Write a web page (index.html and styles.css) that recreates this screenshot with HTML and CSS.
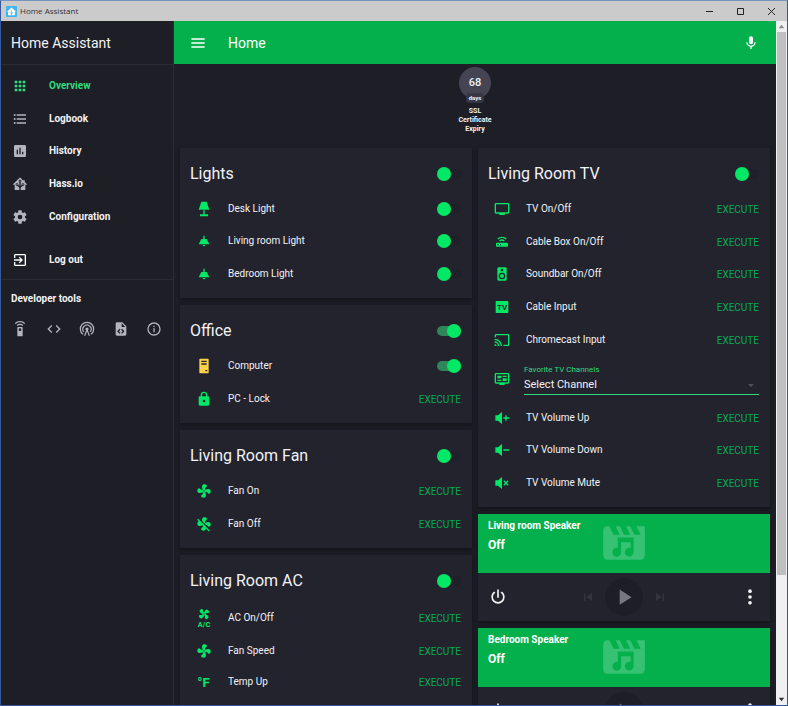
FILE: index.html
```html
<!DOCTYPE html>
<html lang="en">
<head>
<meta charset="utf-8">
<title>Home Assistant</title>
<link rel="stylesheet" href="styles.css">
</head>
<body>
<svg class="sprite" aria-hidden="true">
  <symbol id="apps" viewBox="0 0 24 24"><path d="M16,20H20V16H16M16,14H20V10H16M10,8H14V4H10M16,8H20V4H16M10,14H14V10H10M4,14H8V10H4M4,20H8V16H4M10,20H14V16H10M4,8H8V4H4V8Z"/></symbol>
  <symbol id="list" viewBox="0 0 24 24"><path d="M7,5H21V7H7V5M7,13V11H21V13H7M7,19V17H21V19H7"/><circle cx="4" cy="6" r="1.5"/><circle cx="4" cy="12" r="1.5"/><circle cx="4" cy="18" r="1.5"/></symbol>
  <symbol id="poll" viewBox="0 0 24 24"><path fill-rule="evenodd" d="M17,17H15V13H17ZM13,17H11V7H13ZM9,17H7V10H9ZM19,3H5C3.89,3 3,3.89 3,5V19A2,2 0 0,0 5,21H19A2,2 0 0,0 21,19V5C21,3.89 20.1,3 19,3Z"/></symbol>
  <symbol id="hass" viewBox="0 0 24 24"><path d="M21.8,13H20V21H13V17.67L15.79,14.88L16.5,15C17.66,15 18.6,14.06 18.6,12.9C18.6,11.74 17.66,10.8 16.5,10.8A2.1,2.1 0 0,0 14.4,12.9L14.5,13.61L13,15.13V9.65C13.66,9.29 14.1,8.6 14.1,7.8A2.1,2.1 0 0,0 12,5.7A2.1,2.1 0 0,0 9.9,7.8C9.9,8.6 10.34,9.29 11,9.65V15.13L9.5,13.61L9.6,12.9A2.1,2.1 0 0,0 7.5,10.8A2.1,2.1 0 0,0 5.4,12.9A2.1,2.1 0 0,0 7.5,15L8.21,14.88L11,17.67V21H4V13H2.25C1.83,13 1.42,13 1.42,12.79C1.43,12.57 1.85,12.15 2.28,11.72L11,3C11.33,2.67 11.67,2.33 12,2.33C12.33,2.33 12.67,2.67 13,3L17,7V6H19V9L21.78,11.78C22.18,12.18 22.59,12.59 22.6,12.8C22.6,13 22.2,13 21.8,13Z"/><circle cx="7.5" cy="12.9" r=".9"/><circle cx="16.5" cy="12.9" r=".9"/><circle cx="12" cy="7.8" r=".9"/></symbol>
  <symbol id="cog" viewBox="0 0 24 24"><path d="M12,15.5A3.5,3.5 0 0,1 8.5,12A3.5,3.5 0 0,1 12,8.5A3.5,3.5 0 0,1 15.5,12A3.5,3.5 0 0,1 12,15.5M19.43,12.97C19.47,12.65 19.5,12.33 19.5,12C19.5,11.67 19.47,11.34 19.43,11L21.54,9.37C21.73,9.22 21.78,8.95 21.66,8.73L19.66,5.27C19.54,5.05 19.27,4.96 19.05,5.05L16.56,6.05C16.04,5.66 15.5,5.32 14.87,5.07L14.5,2.42C14.46,2.18 14.25,2 14,2H10C9.75,2 9.54,2.18 9.5,2.42L9.13,5.07C8.5,5.32 7.96,5.66 7.44,6.05L4.95,5.05C4.73,4.96 4.46,5.05 4.34,5.27L2.34,8.73C2.21,8.95 2.27,9.22 2.46,9.37L4.57,11C4.53,11.34 4.5,11.67 4.5,12C4.5,12.33 4.53,12.65 4.57,12.97L2.46,14.63C2.27,14.78 2.21,15.05 2.34,15.27L4.34,18.73C4.46,18.95 4.73,19.03 4.95,18.95L7.44,17.94C7.96,18.34 8.5,18.68 9.13,18.93L9.5,21.58C9.54,21.82 9.75,22 10,22H14C14.25,22 14.46,21.82 14.5,21.58L14.87,18.93C15.5,18.67 16.04,18.34 16.56,17.94L19.05,18.95C19.27,19.03 19.54,18.95 19.66,18.73L21.66,15.27C21.78,15.05 21.73,14.78 21.54,14.63L19.43,12.97Z"/></symbol>
  <symbol id="exit" viewBox="0 0 24 24"><path d="M19,3H5C3.89,3 3,3.89 3,5V9H5V5H19V19H5V15H3V19A2,2 0 0,0 5,21H19A2,2 0 0,0 21,19V5C21,3.89 20.1,3 19,3M10.08,15.58L11.5,17L16.5,12L11.5,7L10.08,8.41L12.67,11H3V13H12.67L10.08,15.58Z"/></symbol>
  <symbol id="remote" viewBox="0 0 24 24"><path d="M12,0C8.96,0 6.21,1.23 4.22,3.22L5.63,4.63C7.26,3 9.5,2 12,2C14.5,2 16.74,3 18.36,4.64L19.77,3.23C17.79,1.23 15.04,0 12,0M7.05,6.05L8.46,7.46C9.37,6.56 10.62,6 12,6C13.38,6 14.63,6.56 15.54,7.46L16.95,6.05C15.68,4.78 13.93,4 12,4C10.07,4 8.32,4.78 7.05,6.05M12,15A2,2 0 0,1 10,13A2,2 0 0,1 12,11A2,2 0 0,1 14,13A2,2 0 0,1 12,15M15,9H9A1,1 0 0,0 8,10V22A1,1 0 0,0 9,23H15A1,1 0 0,0 16,22V10A1,1 0 0,0 15,9Z"/></symbol>
  <symbol id="code" viewBox="0 0 24 24"><path d="M14.6,16.6L19.2,12L14.6,7.4L16,6L22,12L16,18L14.6,16.6M9.4,16.6L4.8,12L9.4,7.4L8,6L2,12L8,18L9.4,16.6Z"/></symbol>
  <symbol id="antenna" viewBox="0 0 24 24"><g fill="none" stroke="currentColor" stroke-width="1.8"><path d="M6,20A10,10 0 1,1 18,20"/><path d="M7.2,16.4A6.2,6.2 0 1,1 16.8,16.4"/><path d="M12,13L8.4,22M12,13L15.6,22"/></g><circle cx="12" cy="12" r="2.4"/></symbol>
  <symbol id="file" viewBox="0 0 24 24"><path fill-rule="evenodd" d="M13,9H18.5L13,3.5V9ZM6,2H14L20,8V20A2,2 0 0,1 18,22H6C4.89,22 4,21.1 4,20V4C4,2.89 4.89,2 6,2ZM6.12,15.5L9.86,19.24L11.28,17.83L8.95,15.5L11.28,13.17L9.86,11.76L6.12,15.5ZM17.28,15.5L13.54,11.76L12.12,13.17L14.45,15.5L12.12,17.83L13.54,19.24L17.28,15.5Z"/></symbol>
  <symbol id="info" viewBox="0 0 24 24"><path d="M11,9H13V7H11M12,20C7.59,20 4,16.41 4,12C4,7.59 7.59,4 12,4C16.41,4 20,7.59 20,12C20,16.41 16.41,20 12,20M12,2A10,10 0 0,0 2,12A10,10 0 0,0 12,22A10,10 0 0,0 22,12A10,10 0 0,0 12,2M11,17H13V11H11V17Z"/></symbol>
  <symbol id="menu" viewBox="0 0 24 24"><path d="M2,5H22V7H2ZM2,11H22V13H2ZM2,17H22V19H2Z"/></symbol>
  <symbol id="mic" viewBox="0 0 24 24"><path d="M12,2A3,3 0 0,1 15,5V11A3,3 0 0,1 12,14A3,3 0 0,1 9,11V5A3,3 0 0,1 12,2M19,11C19,14.53 16.39,17.44 13,17.93V21H11V17.93C7.61,17.44 5,14.53 5,11H7A5,5 0 0,0 12,16A5,5 0 0,0 17,11H19Z"/></symbol>
  <symbol id="lamp" viewBox="0 0 24 24"><path d="M8,1H16L20,13H4L8,1M11,14H13V20H18V23H6V20H11V14Z"/></symbol>
  <symbol id="ceiling" viewBox="0 0 24 24"><path d="M8,9H11V4H13V9H16L20,17H4L8,9M14,18A2,2 0 0,1 12,20A2,2 0 0,1 10,18H14Z"/></symbol>
  <symbol id="tower" viewBox="0 0 24 24"><path fill-rule="evenodd" d="M6,1H18A1,1 0 0,1 19,2V22A1,1 0 0,1 18,23H6A1,1 0 0,1 5,22V2A1,1 0 0,1 6,1ZM8,4V6H16V4ZM16,8H8V10H16ZM17,18H14V20H17Z"/></symbol>
  <symbol id="lock" viewBox="0 0 24 24"><path d="M12,17A2,2 0 0,0 14,15C14,13.89 13.1,13 12,13A2,2 0 0,0 10,15A2,2 0 0,0 12,17M18,8A2,2 0 0,1 20,10V20A2,2 0 0,1 18,22H6A2,2 0 0,1 4,20V10C4,8.89 4.9,8 6,8H7V6A5,5 0 0,1 12,1A5,5 0 0,1 17,6V8H18M12,3A3,3 0 0,0 9,6V8H15V6A3,3 0 0,0 12,3Z"/></symbol>
  <symbol id="fan" viewBox="0 0 24 24"><path d="M12,11A1,1 0 0,0 11,12A1,1 0 0,0 12,13A1,1 0 0,0 13,12A1,1 0 0,0 12,11M12.5,2C17,2 17.11,5.57 14.75,6.75C13.76,7.24 13.32,8.29 13.13,9.22C13.61,9.42 14.03,9.73 14.35,10.13C18.05,8.13 22.03,8.92 22.03,12.5C22.03,17 18.46,17.1 17.28,14.73C16.78,13.74 15.72,13.3 14.79,13.11C14.59,13.59 14.28,14 13.88,14.34C15.87,18.03 15.08,22 11.5,22C7,22 6.91,18.42 9.27,17.24C10.25,16.75 10.69,15.71 10.89,14.79C10.4,14.59 9.97,14.27 9.65,13.87C5.96,15.85 2,15.07 2,11.5C2,7 5.56,6.89 6.74,9.26C7.24,10.25 8.29,10.68 9.22,10.87C9.41,10.39 9.73,9.97 10.14,9.65C8.15,5.96 8.94,2 12.5,2Z"/></symbol>
  <symbol id="fan-off" viewBox="0 0 24 24"><use href="#fan" width="24" height="24"/><path class="cut" d="M3,3L22,22"/><path class="slash" d="M2.5,5L20,22.5"/></symbol>
  <symbol id="tv" viewBox="0 0 24 24"><path d="M21,17H3V5H21M21,3H3A2,2 0 0,0 1,5V17A2,2 0 0,0 3,19H8V21H16V19H21A2,2 0 0,0 23,17V5A2,2 0 0,0 21,3Z"/></symbol>
  <symbol id="router" viewBox="0 0 24 24"><path d="M4,13H20A1,1 0 0,1 21,14V18A1,1 0 0,1 20,19H4A1,1 0 0,1 3,18V14A1,1 0 0,1 4,13M9,17H10V15H9V17M5,15V17H7V15H5M19,6.93L17.6,8.34C16.15,6.89 14.15,6 11.93,6C9.72,6 7.72,6.89 6.27,8.34L4.87,6.93C6.68,5.12 9.18,4 11.93,4C14.69,4 17.19,5.12 19,6.93M16.17,9.76L14.77,11.17C14.04,10.45 13.04,10 11.93,10C10.82,10 9.82,10.45 9.1,11.17L7.7,9.76C8.78,8.67 10.28,8 11.93,8C13.58,8 15.08,8.67 16.17,9.76Z"/></symbol>
  <symbol id="speaker" viewBox="0 0 24 24"><path d="M12,12A3,3 0 0,0 9,15A3,3 0 0,0 12,18A3,3 0 0,0 15,15A3,3 0 0,0 12,12M12,20A5,5 0 0,1 7,15A5,5 0 0,1 12,10A5,5 0 0,1 17,15A5,5 0 0,1 12,20M12,4A2,2 0 0,1 14,6A2,2 0 0,1 12,8C10.89,8 10,7.1 10,6C10,4.89 10.89,4 12,4M17,2H7C5.89,2 5,2.89 5,4V20A2,2 0 0,0 7,22H17A2,2 0 0,0 19,20V4C19,2.89 18.1,2 17,2Z"/></symbol>
  <symbol id="cast" viewBox="0 0 24 24"><path d="M1,10V12A9,9 0 0,1 10,21H12C12,14.92 7.07,10 1,10M1,14V16A5,5 0 0,1 6,21H8A7,7 0 0,0 1,14M1,18V21H4A3,3 0 0,0 1,18M21,3H3C1.89,3 1,3.89 1,5V8H3V5H21V19H14V21H21A2,2 0 0,0 23,19V5C23,3.89 22.1,3 21,3Z"/></symbol>
  <symbol id="guide" viewBox="0 0 24 24"><path d="M21,17V5H3V17H21M21,3A2,2 0 0,1 23,5V17A2,2 0 0,1 21,19H16V21H8V19H3A2,2 0 0,1 1,17V5A2,2 0 0,1 3,3H21M5,7H11V11H5V7M5,13H11V15H5V13M13,7H19V9H13V7M13,11H19V15H13V11Z"/></symbol>
  <symbol id="vol-up" viewBox="0 0 24 24"><path d="M2,8H6L12,3V21L6,16H2V8M14,11H17V8H19V11H23V13H19V16H17V13H14V11Z"/></symbol>
  <symbol id="vol-down" viewBox="0 0 24 24"><path d="M2,8H6L12,3V21L6,16H2V8M14,11H23V13H14V11Z"/></symbol>
  <symbol id="vol-mute" viewBox="0 0 24 24"><path d="M2,8H6L12,3V21L6,16H2V8M16.59,12L14,9.41L15.41,8L18,10.59L20.59,8L22,9.41L19.41,12L22,14.59L20.59,16L18,13.41L15.41,16L14,14.59L16.59,12Z"/></symbol>
  <symbol id="power" viewBox="0 0 24 24"><path d="M16.56,5.44L15.11,6.89C16.84,7.94 18,9.83 18,12A6,6 0 0,1 12,18A6,6 0 0,1 6,12C6,9.83 7.16,7.94 8.88,6.88L7.44,5.44C5.36,6.88 4,9.28 4,12A8,8 0 0,0 12,20A8,8 0 0,0 20,12C20,9.28 18.64,6.88 16.56,5.44M13,3H11V13H13"/></symbol>
  <symbol id="prev" viewBox="0 0 24 24"><path d="M6,18V6H8V18H6M9.5,12L18,6V18L9.5,12Z"/></symbol>
  <symbol id="next" viewBox="0 0 24 24"><path d="M16,18H18V6H16M6,18L14.5,12L6,6V18Z"/></symbol>
  <symbol id="play" viewBox="0 0 24 24"><path d="M8,5.14V19.14L19,12.14L8,5.14Z"/></symbol>
  <symbol id="dots" viewBox="0 0 24 24"><circle cx="12" cy="5" r="2.2"/><circle cx="12" cy="12" r="2.2"/><circle cx="12" cy="19" r="2.2"/></symbol>
  <symbol id="movie" viewBox="0 0 24 24"><path d="M18,4L20,8H17L15,4H13L15,8H12L10,4H8L10,8H7L5,4H4A2,2 0 0,0 2,6V18A2,2 0 0,0 4,20H20A2,2 0 0,0 22,18V4H18Z"/><path class="note" d="M9,9.4H16.6V16.4A2.1,2.1 0 1,1 15.2,14.4V11.6H10.6V16.4A2.1,2.1 0 1,1 9,14.4Z"/></symbol>
</svg>

<div class="window">
  <div class="titlebar">
    <svg class="app-icon" viewBox="0 0 12 12" aria-hidden="true"><rect width="12" height="12" rx="1" fill="#41b6ee"/><path fill="#fff" d="M6,1.6L11,6.3H9.7V10.2H2.3V6.3H1Z"/><path stroke="#41b6ee" stroke-width=".8" fill="none" d="M6,10V5M6,8.6L4,6.8M6,8.6L8,6.8"/></svg>
    <span class="app-name">Home Assistant</span>
    <div class="win-buttons">
      <button aria-label="Minimize"><svg viewBox="0 0 9 9"><path d="M1,4.5H8"/></svg></button>
      <button aria-label="Maximize"><svg viewBox="0 0 9 9"><path d="M1.5,1.5H7.5V7.5H1.5Z"/></svg></button>
      <button aria-label="Close"><svg viewBox="0 0 9 9"><path d="M1,1L8,8M8,1L1,8"/></svg></button>
    </div>
  </div>

  <div class="app">
    <aside class="sidebar">
      <h1 class="brand">Home Assistant</h1>
      <nav class="nav">
        <a class="nav-item active" href="#overview"><svg class="icon"><use href="#apps"/></svg>Overview</a>
        <a class="nav-item" href="#logbook"><svg class="icon"><use href="#list"/></svg>Logbook</a>
        <a class="nav-item" href="#history"><svg class="icon"><use href="#poll"/></svg>History</a>
        <a class="nav-item" href="#hassio"><svg class="icon"><use href="#hass"/></svg>Hass.io</a>
        <a class="nav-item" href="#config"><svg class="icon"><use href="#cog"/></svg>Configuration</a>
      </nav>
      <a class="nav-item logout" href="#logout"><svg class="icon"><use href="#exit"/></svg>Log out</a>
      <section class="dev">
        <h2>Developer tools</h2>
        <div class="dev-tools">
          <a href="#services" aria-label="Services"><svg class="icon"><use href="#remote"/></svg></a>
          <a href="#states" aria-label="States"><svg class="icon"><use href="#code"/></svg></a>
          <a href="#events" aria-label="Events"><svg class="icon"><use href="#antenna"/></svg></a>
          <a href="#templates" aria-label="Templates"><svg class="icon"><use href="#file"/></svg></a>
          <a href="#about" aria-label="Info"><svg class="icon"><use href="#info"/></svg></a>
        </div>
      </section>
    </aside>

    <main class="main">
      <header class="toolbar">
        <button aria-label="Menu"><svg class="icon"><use href="#menu"/></svg></button>
        <h2>Home</h2>
        <button class="voice" aria-label="Voice command"><svg class="icon"><use href="#mic"/></svg></button>
      </header>

      <div class="badges">
        <div class="badge">
          <div class="badge-circle">68<span class="badge-unit">days</span></div>
          <div class="badge-name">SSL Certificate Expiry</div>
        </div>
      </div>

      <div class="columns">
        <div class="column">
          <section class="card">
            <header><h3 id="t-lights">Lights</h3><input class="toggle" type="checkbox" aria-labelledby="t-lights"></header>
            <div class="rows three">
              <div class="row"><svg class="icon"><use href="#lamp"/></svg><label for="desk">Desk Light</label><input class="toggle" type="checkbox" id="desk"></div>
              <div class="row"><svg class="icon"><use href="#ceiling"/></svg><label for="living">Living room Light</label><input class="toggle" type="checkbox" id="living"></div>
              <div class="row"><svg class="icon"><use href="#ceiling"/></svg><label for="bedroom">Bedroom Light</label><input class="toggle" type="checkbox" id="bedroom"></div>
            </div>
          </section>
          <section class="card">
            <header><h3 id="t-office">Office</h3><input class="toggle" type="checkbox" aria-labelledby="t-office" checked></header>
            <div class="rows two">
              <div class="row"><svg class="icon on"><use href="#tower"/></svg><label for="computer">Computer</label><input class="toggle" type="checkbox" id="computer" checked></div>
              <div class="row"><svg class="icon"><use href="#lock"/></svg><span>PC - Lock</span><button>EXECUTE</button></div>
            </div>
          </section>
          <section class="card">
            <header><h3 id="t-fan">Living Room Fan</h3><input class="toggle" type="checkbox" aria-labelledby="t-fan"></header>
            <div class="rows two">
              <div class="row"><svg class="icon"><use href="#fan"/></svg><span>Fan On</span><button>EXECUTE</button></div>
              <div class="row"><svg class="icon"><use href="#fan-off"/></svg><span>Fan Off</span><button>EXECUTE</button></div>
            </div>
          </section>
          <section class="card">
            <header><h3 id="t-ac">Living Room AC</h3><input class="toggle" type="checkbox" aria-labelledby="t-ac"></header>
            <div class="rows three">
              <div class="row"><svg class="icon tall" viewBox="0 0 24 30"><g transform="translate(12 9) rotate(45) scale(.86) translate(-12 -12)"><use href="#fan" width="24" height="24"/></g><text class="ac-text" x="12" y="29" text-anchor="middle">A/C</text></svg><span>AC On/Off</span><button>EXECUTE</button></div>
              <div class="row"><svg class="icon"><use href="#fan"/></svg><span>Fan Speed</span><button>EXECUTE</button></div>
              <div class="row"><svg class="icon" viewBox="0 0 24 24"><text class="f-text" x="2" y="20">°F</text></svg><span>Temp Up</span><button>EXECUTE</button></div>
            </div>
          </section>
        </div>

        <div class="column">
          <section class="card">
            <header><h3 id="t-tv">Living Room TV</h3><input class="toggle" type="checkbox" aria-labelledby="t-tv"></header>
            <div class="rows five">
              <div class="row"><svg class="icon"><use href="#tv"/></svg><span>TV On/Off</span><button>EXECUTE</button></div>
              <div class="row"><svg class="icon"><use href="#router"/></svg><span>Cable Box On/Off</span><button>EXECUTE</button></div>
              <div class="row"><svg class="icon"><use href="#speaker"/></svg><span>Soundbar On/Off</span><button>EXECUTE</button></div>
              <div class="row"><svg class="icon" viewBox="0 0 24 24"><rect x="2.5" y="3" width="19" height="18" rx="1"/><text class="tv-text" x="12" y="16.5" text-anchor="middle">TV</text></svg><span>Cable Input</span><button>EXECUTE</button></div>
              <div class="row"><svg class="icon"><use href="#cast"/></svg><span>Chromecast Input</span><button>EXECUTE</button></div>
            </div>
            <div class="select-row">
              <svg class="icon"><use href="#guide"/></svg>
              <div class="field">
                <label for="channel">Favorite TV Channels</label>
                <select id="channel"><option>Select Channel</option></select>
              </div>
            </div>
            <div class="rows three">
              <div class="row"><svg class="icon"><use href="#vol-up"/></svg><span>TV Volume Up</span><button>EXECUTE</button></div>
              <div class="row"><svg class="icon"><use href="#vol-down"/></svg><span>TV Volume Down</span><button>EXECUTE</button></div>
              <div class="row"><svg class="icon"><use href="#vol-mute"/></svg><span>TV Volume Mute</span><button>EXECUTE</button></div>
            </div>
          </section>
          <section class="media">
            <div class="banner"><div class="caption"><h4>Living room Speaker</h4><p>Off</p></div><svg class="art"><use href="#movie"/></svg></div>
            <div class="controls">
              <button aria-label="Power"><svg class="icon large"><use href="#power"/></svg></button>
              <div class="playback">
                <button class="skip" aria-label="Previous"><svg class="icon"><use href="#prev"/></svg></button>
                <button class="play" aria-label="Play"><svg><use href="#play"/></svg></button>
                <button class="skip" aria-label="Next"><svg class="icon"><use href="#next"/></svg></button>
              </div>
              <button aria-label="More"><svg class="icon large"><use href="#dots"/></svg></button>
            </div>
          </section>
          <section class="media">
            <div class="banner"><div class="caption"><h4>Bedroom Speaker</h4><p>Off</p></div><svg class="art"><use href="#movie"/></svg></div>
            <div class="controls">
              <button aria-label="Power"><svg class="icon large"><use href="#power"/></svg></button>
              <div class="playback">
                <button class="skip" aria-label="Previous"><svg class="icon"><use href="#prev"/></svg></button>
                <button class="play" aria-label="Play"><svg><use href="#play"/></svg></button>
                <button class="skip" aria-label="Next"><svg class="icon"><use href="#next"/></svg></button>
              </div>
              <button aria-label="More"><svg class="icon large"><use href="#dots"/></svg></button>
            </div>
          </section>
        </div>
      </div>
    </main>

    <div class="scrollbar" aria-hidden="true">
      <svg class="arrow" viewBox="0 0 10 10"><path fill="#8a8a8a" d="M5,3.5L7.5,6.5H2.5Z"/></svg>
      <div class="track"><div class="thumb"></div></div>
      <svg class="arrow" viewBox="0 0 10 10"><path fill="#333" d="M5,6.5L7.5,3.5H2.5Z"/></svg>
    </div>
  </div>
</div>
</body>
</html>
```
FILE: styles.css
```css
:root {
  --bg: #1d1e26;
  --card: #23232e;
  --line: #2b2c36;
  --primary: #03b04c;
  --accent: #00e865;
  --text: #f2f2f5;
  --muted: #b4b4be;
}

* { box-sizing: border-box; }

body {
  margin: 0;
  font: 10px/12px Roboto, "Liberation Sans", sans-serif;
  color: var(--text);
}

h1, h2, h3, h4, p { margin: 0; font-weight: 400; }

button {
  padding: 0;
  border: 0;
  background: none;
  color: inherit;
  font: inherit;
  display: flex;
}

a { color: inherit; text-decoration: none; }

.sprite { position: absolute; width: 0; height: 0; }

.icon { width: 16px; height: 16px; fill: currentColor; flex: none; display: block; }
.icon.tall { height: 20px; }
.icon.large { width: 20px; height: 20px; }

.window {
  height: 100vh;
  display: flex;
  flex-direction: column;
  border: 1px solid #35589c;
  border-top-color: #7692c0;
  overflow: hidden;
  background: var(--bg);
}

/* Title bar */
.titlebar {
  flex: none;
  height: 20px;
  display: flex;
  align-items: center;
  gap: 3px;
  padding-left: 5px;
  background: #cbcbcb;
  color: #333;
}
.app-icon { width: 11px; height: 11px; }
.app-name { font: 8px/12px "Open Sans", sans-serif; }
.win-buttons { margin-left: auto; display: flex; }
.win-buttons button { width: 31px; justify-content: center; }
.win-buttons svg { width: 9px; height: 9px; fill: none; stroke: #222; }

.app { flex: 1; min-height: 0; display: flex; }

/* Sidebar */
.sidebar { width: 173px; flex: none; border-right: 1px solid var(--line); }
.brand {
  height: 44px;
  padding-left: 10px;
  font-size: 14px;
  line-height: 44px;
  border-bottom: 1px solid var(--line);
}
.nav { display: grid; min-height: 163px; margin-top: 5px; }
.nav-item {
  display: flex;
  align-items: center;
  gap: 21px;
  padding-left: 11px;
  font-weight: 700;
}
.nav-item .icon { color: var(--muted); }
.nav-item.active, .nav-item.active .icon { color: #31dc7c; }
.nav-item.logout { height: 33px; margin: 10px 0 3px; }
.nav-item.logout .icon { color: #fff; }
.dev { border-top: 1px solid var(--line); padding: 13px 10px; }
.dev h2 { font-size: 10px; font-weight: 700; }
.dev-tools {
  display: flex;
  justify-content: space-between;
  padding: 16px 1px 0;
  color: var(--muted);
}

/* Main view */
.main { flex: 1; min-width: 0; overflow: hidden; }
.toolbar {
  height: 43px;
  display: flex;
  align-items: center;
  gap: 22px;
  padding: 0 17px 0 16px;
  background: var(--primary);
  color: #fff;
}
.toolbar h2 { font-size: 14px; }
.voice { margin-left: auto; }

.badges { display: flex; justify-content: center; min-height: 84px; padding-top: 3px; }
.badge { width: 40px; text-align: center; font-size: 7px; font-weight: 700; }
.badge-circle {
  position: relative;
  width: 32px;
  height: 32px;
  margin: 0 auto;
  border-radius: 50%;
  background: #444453;
  font-size: 11px;
  font-weight: 500;
  line-height: 32px;
}
.badge-unit {
  position: absolute;
  left: 7px;
  right: 7px;
  bottom: -4px;
  border-radius: 4px;
  background: #363644;
  font-size: 6px;
  font-weight: 700;
  line-height: 10px;
}
.badge-name { margin-top: 8px; line-height: 9px; }

.columns { display: grid; grid-template-columns: 1fr 1fr; gap: 6px; padding: 0 6px; }
.column { display: flex; flex-direction: column; gap: 7px; }

/* Entity cards */
.card, .media { background: var(--card); box-shadow: 0 2px 4px #14141a; }
.card { padding-bottom: 8px; }
.card header {
  display: flex;
  align-items: center;
  justify-content: space-between;
  height: 45px;
  padding: 7px 11px 0 10px;
}
.card h3 { font-size: 16px; line-height: 20px; }

.rows { display: grid; }
.two { min-height: 65px; }
.three { min-height: 97px; }
.five { min-height: 163px; }
.row { display: flex; align-items: center; gap: 16px; padding: 0 11px 0 16px; color: var(--accent); }
.row label, .row span { flex: 1; color: var(--text); }
.row button { color: #07a950; padding-top: 2px; }
.row .on { color: #fdd24a; }

.cut { stroke: var(--card); stroke-width: 2; }
.slash { stroke: currentColor; stroke-width: 2; }
.ac-text { font: 700 11px Roboto, sans-serif; }
.f-text { font: 700 20px Roboto, sans-serif; }
.tv-text { font: 700 12px Roboto, sans-serif; fill: var(--card); }
.note { fill: var(--primary); }

.toggle {
  appearance: none;
  position: relative;
  width: 24px;
  height: 14px;
  margin: 0;
}
.toggle::before {
  content: "";
  position: absolute;
  inset: 2px 0;
  border-radius: 5px;
  background: #20202a;
}
.toggle::after {
  content: "";
  position: absolute;
  left: 0;
  top: 0;
  width: 14px;
  height: 14px;
  border-radius: 50%;
  background: var(--accent);
}
.toggle:checked::before { background: #2f8658; }
.toggle:checked::after { left: auto; right: 0; }

.select-row { display: flex; align-items: center; gap: 14px; height: 46px; padding: 0 11px 0 16px; color: var(--accent); }
.field { position: relative; flex: 1; display: flex; flex-direction: column; padding-top: 2px; }
.field label { font-size: 8px; line-height: 10px; color: #31d87c; }
.field select {
  appearance: none;
  height: 20px;
  padding: 0;
  border: 0;
  border-bottom: 1px solid #31d87c;
  border-radius: 0;
  background: none;
  color: var(--text);
  font: 11px/16px Roboto, sans-serif;
}
.field::after {
  content: "";
  position: absolute;
  right: 5px;
  bottom: 8px;
  border: 3px solid transparent;
  border-top-color: #50505c;
  border-bottom: 0;
}

/* Media players */
.banner {
  position: relative;
  height: 59px;
  padding: 5px 10px;
  background: var(--primary);
  color: #fff;
}
.banner h4 { font-size: 10px; font-weight: 700; line-height: 14px; }
.banner p { font-size: 12px; font-weight: 700; line-height: 24px; }
.art { position: absolute; left: calc(50% - 25px); top: 4px; width: 50px; height: 50px; fill: #36c272; }
.controls { display: flex; align-items: center; justify-content: space-between; height: 48px; padding: 0 10px; }
.playback { display: flex; align-items: center; gap: 9px; }
.skip { color: #343440; }
.play {
  width: 38px;
  height: 38px;
  align-items: center;
  justify-content: center;
  border-radius: 50%;
  background: #1e1e27;
}
.play svg { width: 26px; height: 26px; fill: #777781; }

/* Scrollbar */
.scrollbar { width: 11px; flex: none; display: flex; flex-direction: column; background: #f0f0f0; }
.arrow { width: 11px; height: 11px; flex: none; }
.track { flex: 1; padding: 0 1px; }
.thumb { height: 82%; background: #bfbfbf; }
```
